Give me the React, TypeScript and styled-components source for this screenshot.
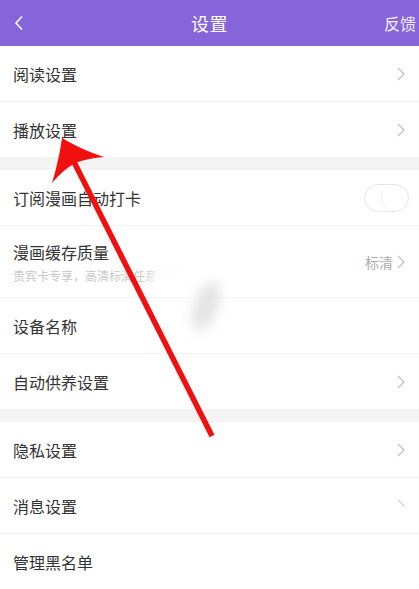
import React from "react"
import styled, { createGlobalStyle } from "styled-components"

const GlobalStyle = createGlobalStyle`
  html, body {
    margin: 0;
    padding: 0;
    background: #ffffff;
    font-family: "Noto Sans CJK SC", "Noto Sans", sans-serif;
  }
`

const Page = styled.div`
  position: relative;
  width: 419px;
  height: 589px;
  overflow: hidden;
  background: #ffffff;
`

const Header = styled.header`
  height: 46px;
  background: #8565d9;
  display: grid;
  grid-template-columns: 60px 1fr 60px;
  align-items: center;
  color: #ffffff;
`

const Back = styled.div`
  padding-left: 14px;
  display: flex;
  align-items: center;
`

const Title = styled.h1`
  margin: 0;
  text-align: center;
  font-size: 18px;
  font-weight: 400;
  letter-spacing: 0.5px;
`

const Feedback = styled.div`
  text-align: right;
  font-size: 16px;
  color: #f3eeff;
  padding-right: 3px;
  white-space: nowrap;
`

const Section = styled.section`
  display: flex;
  flex-direction: column;
  background: #ffffff;
`

const Gap = styled.div`
  height: 13px;
  background: #f3f3f3;
`

const Row = styled.div<{ $tall?: boolean }>`
  height: ${p => (p.$tall ? 71 : 55)}px;
  display: flex;
  align-items: center;
  justify-content: space-between;
  padding: 0 13px 0 13px;
  & + & {
    border-top: 1px solid #f1f1f1;
  }
`

const Texts = styled.div`
  display: flex;
  flex-direction: column;
  gap: 3px;
`

const Label = styled.span`
  font-size: 16px;
  color: #333333;
`

const Sub = styled.span`
  font-size: 12px;
  color: #c9c9c9;
  white-space: nowrap;
`

const Right = styled.div`
  display: flex;
  align-items: center;
  gap: 3px;
  font-size: 14px;
  color: #ababab;
`

const Toggle = styled.div`
  width: 45px;
  height: 28px;
  border: 1px solid #e6e6e6;
  border-radius: 15px;
  box-sizing: border-box;
  position: relative;
  margin-right: -3px;
  &::after {
    content: "";
    position: absolute;
    right: 0;
    top: 0;
    width: 26px;
    height: 26px;
    border-radius: 50%;
    border-left: 1px solid #ececec;
  }
`

const Overlay = styled.svg`
  position: absolute;
  left: 0;
  top: 0;
  pointer-events: none;
`

const Smudge = styled.div`
  position: absolute;
  left: 152px;
  top: 264px;
  width: 190px;
  height: 32px;
  background: #ffffff;
  filter: blur(6px);
`

const Blob = styled.div`
  position: absolute;
  left: 194px;
  top: 280px;
  width: 24px;
  height: 52px;
  border-radius: 50%;
  background: #e4e4e4;
  transform: rotate(20deg);
  filter: blur(6px);
`

const Chevron = ({ partial }: { partial?: boolean }) => (
  <svg width="10" height="16" viewBox="0 0 10 16">
    <path
      d={partial ? "M2 2 L8 8" : "M2 2 L8 8 L2 14"}
      fill="none"
      stroke={partial ? "#d0d0d0" : "#c4c4c4"}
      strokeWidth="1.2"
    />
  </svg>
)

type Item = { label: string; chevron?: boolean; partial?: boolean }

const SimpleRow = ({ label, chevron, partial }: Item) => (
  <Row>
    <Label>{label}</Label>
    {chevron && <Chevron partial={partial} />}
  </Row>
)

export default function App() {
  return (
    <Page>
      <GlobalStyle />
      <Header>
        <Back>
          <svg width="10" height="16" viewBox="0 0 10 16">
            <path d="M8 1.5 L2 8 L8 14.5" fill="none" stroke="#ffffff" strokeWidth="1.6" />
          </svg>
        </Back>
        <Title>设置</Title>
        <Feedback>反馈</Feedback>
      </Header>

      <Section>
        <SimpleRow label="阅读设置" chevron />
        <SimpleRow label="播放设置" chevron />
      </Section>
      <Gap />
      <Section>
        <Row>
          <Label>订阅漫画自动打卡</Label>
          <Toggle />
        </Row>
        <Row $tall>
          <Texts>
            <Label>漫画缓存质量</Label>
            <Sub>贵宾卡专享，高清标清任意切换</Sub>
          </Texts>
          <Right>
            标清
            <Chevron />
          </Right>
        </Row>
        <SimpleRow label="设备名称" />
        <SimpleRow label="自动供养设置" chevron />
      </Section>
      <Gap />
      <Section>
        <SimpleRow label="隐私设置" chevron />
        <SimpleRow label="消息设置" chevron partial />
        <SimpleRow label="管理黑名单" />
      </Section>

      <Smudge />
      <Blob />
      <Overlay width="419" height="589" viewBox="0 0 419 589">
        <line x1="74" y1="162" x2="212" y2="436" stroke="#f01010" strokeWidth="5.5" />
        <path
          d="M62 138 Q59 160 52 183 Q63 170 75 163 Q89 158 104 157 Q82 150 62 138 Z"
          fill="#f01010"
        />
      </Overlay>
    </Page>
  )
}
